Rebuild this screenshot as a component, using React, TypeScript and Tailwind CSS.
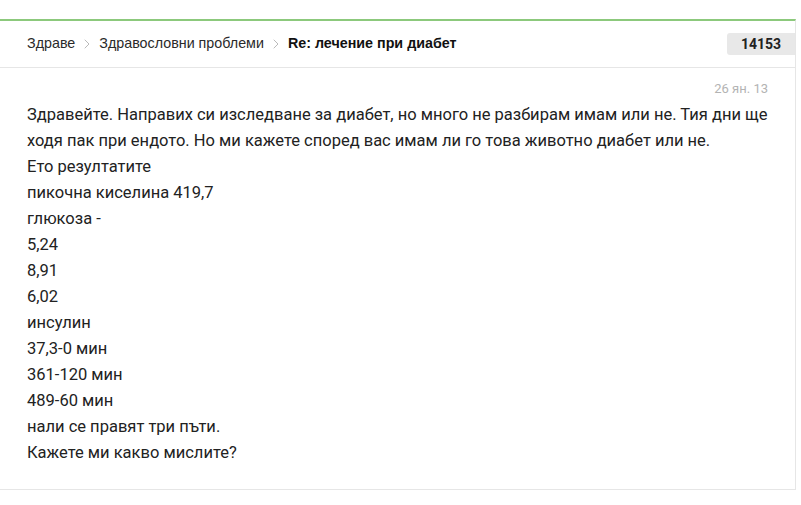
import { ChevronRight } from "lucide-react"

const lines = [
    "Ето резултатите",
    "пикочна киселина 419,7",
    "глюкоза -",
    "5,24",
    "8,91",
    "6,02",
    "инсулин",
    "37,3-0 мин",
    "361-120 мин",
    "489-60 мин",
    "нали се правят три пъти.",
    "Кажете ми какво мислите?",
]

export default function App() {
    return (
        <div className="min-h-[505px] bg-white pt-[19px]">
            <div className="w-[796px] border-t-2 border-r border-b border-t-[#8cc97c] border-r-[#e6e6e6] border-b-[#e6e6e6] bg-white">
                {/* breadcrumb */}
                <div className="flex h-[47px] items-center justify-between border-b border-[#e6e6e6] pl-[27px]">
                    <nav className="flex items-center text-[14.3px] text-[#2a2a2a] font-['Liberation_Sans',Arial,sans-serif]">
                        <span>Здраве</span>
                        <ChevronRight className="mx-[4px] h-[16px] w-[16px] text-[#b5b5b5]" strokeWidth={1.4} />
                        <span>Здравословни проблеми</span>
                        <ChevronRight className="mx-[4px] h-[16px] w-[16px] text-[#b5b5b5]" strokeWidth={1.4} />
                        <span className="font-bold text-[#111]">Re: лечение при диабет</span>
                    </nav>
                    <span className="flex h-[22px] w-[68px] items-center justify-center rounded-l-[3px] bg-[#e8e8e8] text-[14px] font-bold text-[#222] font-['Roboto',sans-serif]">
                        14153
                    </span>
                </div>
                {/* post */}
                <div className="px-[27px] pb-[23px] pt-[13px] font-['Roboto',sans-serif]">
                    <div className="text-right text-[13px] leading-[16px] text-[#b3b3b3]">26 ян. 13</div>
                    <div className="mt-[5px] text-[16.5px] leading-[26px] text-[#222]">
                        <p>
                            Здравейте. Направих си изследване за диабет, но много не разбирам имам или не. Тия дни ще ходя пак при ендото. Но ми кажете според вас имам ли го това животно диабет или не.
                        </p>
                        {lines.map((l) => (
                            <p key={l}>{l}</p>
                        ))}
                    </div>
                </div>
            </div>
        </div>
    )
}
